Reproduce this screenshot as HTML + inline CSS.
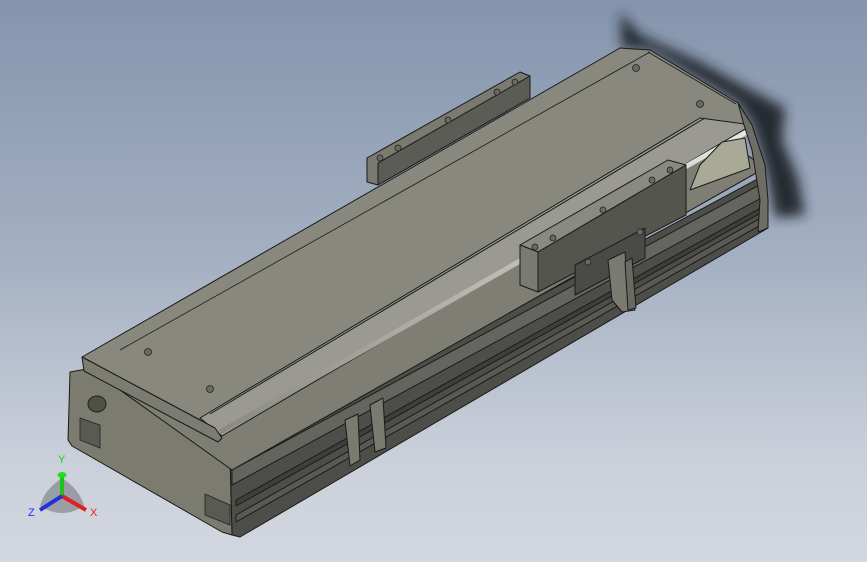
<!DOCTYPE html>
<html><head><meta charset="utf-8"><style>
html,body{margin:0;padding:0;width:867px;height:562px;overflow:hidden}
body{background:linear-gradient(180deg,#8595ad 0%,#a3afc2 45%,#c9cfd9 80%,#d3d7df 100%)}
svg{position:absolute;left:0;top:0}
</style></head><body>
<svg width="867" height="562" viewBox="0 0 867 562" xmlns="http://www.w3.org/2000/svg" font-family="Liberation Sans, sans-serif">
<defs>
<filter id="bl" x="-30%" y="-30%" width="160%" height="160%"><feGaussianBlur stdDeviation="6"/></filter>
<linearGradient id="rail" x1="0" y1="0" x2="0" y2="1"><stop offset="0" stop-color="#e8e8e2"/><stop offset="1" stop-color="#8a8a82"/></linearGradient>
</defs>
<polygon points="620,12 640,35 700,62 755,92 785,108 782,140 798,178 805,215 775,218 766,170 752,125 738,103 650,50 622,48" fill="#1e2228" opacity="0.92" filter="url(#bl)"/>
<g stroke="#1a1a18" stroke-width="1" stroke-linejoin="round">
<polygon points="367,158 520,72 530,76 530,98 378,185 367,182" fill="#7a7a70"/>
<polygon points="378,163 530,76 530,98 378,185" fill="#5c5c57"/>
<polygon points="230,462 765,175 768,228 240,537 232,535" fill="#4d4d49"/>
<polygon points="232,470 765,182 765,196 232,485" fill="#65655f"/>
<polygon points="236,500 766,205 766,210 236,506" fill="#3e3e3b"/>
<polygon points="236,515 766,215 766,222 236,522" fill="#5a5a55"/>
<polygon points="70,372 92,368 230,458 232,535 222,532 72,446 68,440" fill="#7b7b70"/>
<polygon points="92,370 620,62 765,168 232,470" fill="#7e7e75"/>
<polygon points="82,357 620,48 650,50 738,103 752,125 215,428" fill="#88887f"/>
<polygon points="200,418 700,118 752,125 222,436" fill="#9a9a92"/>
<line x1="220" y1="432" x2="750" y2="130" stroke="url(#rail)" stroke-width="5"/>
<line x1="210" y1="414" x2="705" y2="118" stroke-width="1"/>
<line x1="120" y1="350" x2="650" y2="52" stroke-width="0.8"/>
<line x1="648" y1="52" x2="736" y2="104" stroke-width="0.8"/>
<polygon points="82,357 215,428 222,438 218,442 84,371" fill="#7c7c72"/>
<polygon points="738,103 752,125 765,165 768,200 768,228 758,232 760,200 752,150 744,125" fill="#6e6e66"/>
<polygon points="722,142 745,138 750,168 690,190 700,165" fill="#a9a998"/>
<polygon points="520,245 668,160 686,165 538,252" fill="#8a8a82"/>
<polygon points="538,252 686,165 686,215 538,292" fill="#55554f"/>
<polygon points="520,245 538,252 538,292 520,285" fill="#7a7a70"/>
<polygon points="575,265 645,228 645,258 575,295" fill="#4a4a46"/>
<polygon points="608,260 625,252 628,300 635,310 622,312 612,300" fill="#7a7a70"/>
<polygon points="625,262 632,258 636,308 628,310" fill="#6a6a62"/>
<polygon points="345,420 358,414 360,460 350,466" fill="#7a7a70"/>
<polygon points="370,405 383,398 386,448 375,452" fill="#7a7a70"/>
</g>
<g fill="#6a6a62" stroke="#222" stroke-width="0.8">
<circle cx="148" cy="352" r="3.5"/><circle cx="210" cy="389" r="3.5"/>
<circle cx="636" cy="68" r="3.5"/><circle cx="700" cy="104" r="3.5"/>
<circle cx="380" cy="158" r="3"/><circle cx="398" cy="148" r="3"/><circle cx="448" cy="120" r="3"/><circle cx="497" cy="92" r="3"/><circle cx="515" cy="82" r="3"/>
<circle cx="535" cy="247" r="3"/><circle cx="553" cy="238" r="3"/><circle cx="603" cy="210" r="3"/><circle cx="652" cy="180" r="3"/><circle cx="670" cy="170" r="3"/>
<circle cx="588" cy="262" r="3"/><circle cx="640" cy="232" r="3"/>
</g>
<ellipse cx="97" cy="404" rx="9" ry="8" fill="#505049" stroke="#222"/>
<polygon points="80,418 100,425 100,448 80,440" fill="#5a5a54" stroke="#222" stroke-width="0.8"/>
<polygon points="205,494 230,505 230,525 205,515" fill="#5a5a54" stroke="#222" stroke-width="0.8"/>
<g>
<path d="M62,478 Q80,490 84,506 Q62,520 40,506 Q44,490 62,478Z" fill="#000" opacity="0.25"/>
<line x1="62" y1="496" x2="62" y2="476" stroke="#1cc21c" stroke-width="4"/>
<ellipse cx="62" cy="475" rx="4.5" ry="3" fill="#22dd22"/>
<line x1="62" y1="496" x2="86" y2="510" stroke="#e02020" stroke-width="4"/>
<line x1="62" y1="496" x2="40" y2="510" stroke="#2030e0" stroke-width="4"/>
<text x="58" y="463" font-size="11" fill="#22cc22">Y</text>
<text x="90" y="516" font-size="11" fill="#ee2222">X</text>
<text x="28" y="516" font-size="11" fill="#2233ee">Z</text>
</g>
</svg>
</body></html>
